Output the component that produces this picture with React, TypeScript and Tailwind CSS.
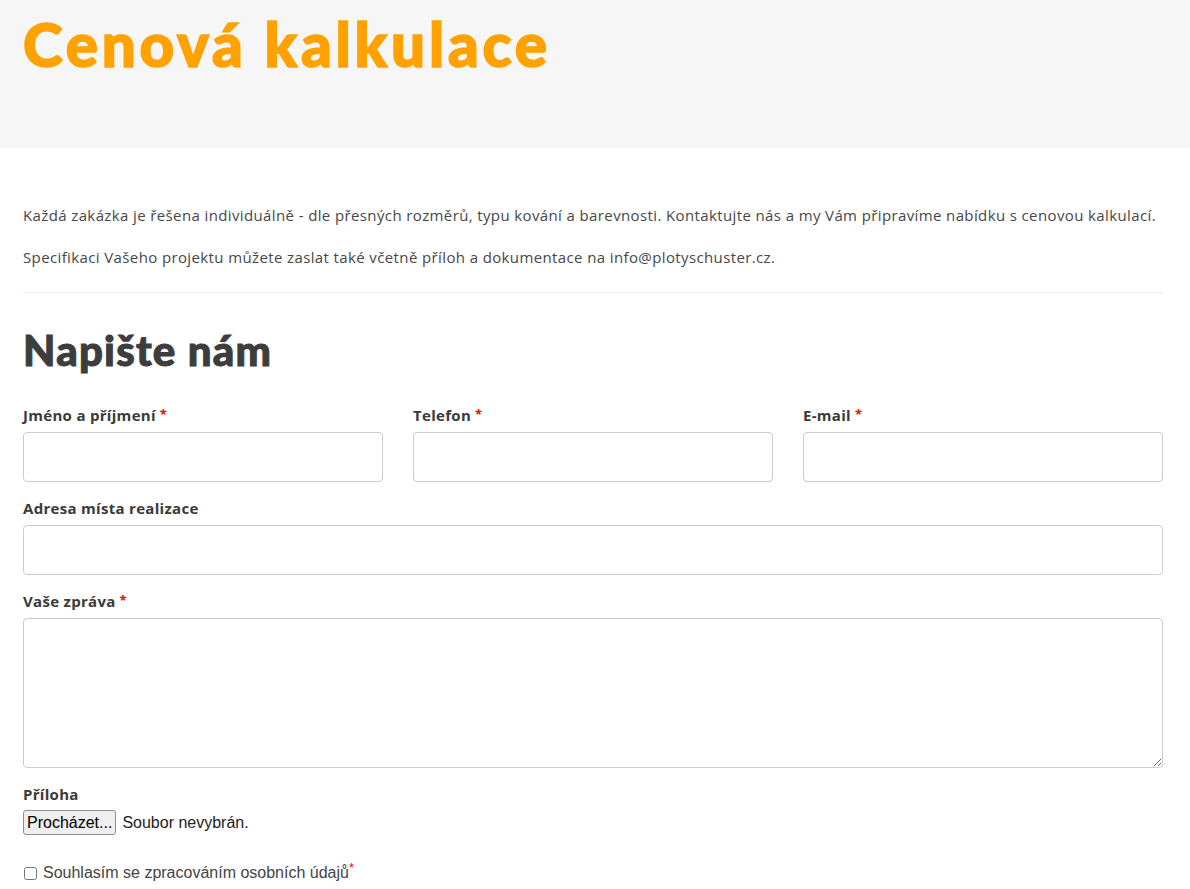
import React from "react";

const font = { fontFamily: "'Open Sans', Lato, sans-serif" };
const sys = { fontFamily: "'Liberation Sans', Arial, sans-serif" };

function Req() {
  return <sup className="ml-[4px] text-[13px] text-[#ff0000] relative top-[-2px]">*</sup>;
}

function Field({ label, required }: { label: string; required?: boolean }) {
  return (
    <div className="flex flex-col">
      <label className="text-[15px] font-bold text-[#3a3a3a] leading-[20px] mb-[7px] tracking-[0.3px]">
        {label}
        {required && <Req />}
      </label>
      <input className="h-[50px] w-full rounded-[4px] border border-[#cccccc] bg-white outline-none" />
    </div>
  );
}

export default function App() {
  return (
    <div className="min-h-screen bg-white text-[#444]" style={font}>
      <header className="h-[148px] bg-[#f6f6f6] pl-[23px] pt-[6px]">
        <h1
          className="text-[60px] font-black leading-[76px] text-[#ffa200] tracking-[3.8px] [-webkit-text-stroke:1.6px_#ffa200]"
          style={{ fontFamily: "Lato, sans-serif" }}
        >
          Cenová kalkulace
        </h1>
      </header>

      <main className="w-[1163px] pl-[23px] pt-[56px]">
        <div className="text-[15px] leading-[22px] text-[#474747] tracking-[0.38px]">
          <p className="mb-[20px]">
            Každá zakázka je řešena individuálně - dle přesných rozměrů, typu kování a barevnosti. Kontaktujte nás a my Vám připravíme nabídku s cenovou kalkulací.
          </p>
          <p>Specifikaci Vašeho projektu můžete zaslat také včetně příloh a dokumentace na info@plotyschuster.cz.</p>
        </div>

        <hr className="mt-[24px] border-0 border-t border-[#ececec]" />

        <h2
          className="mt-[30px] text-[42px] font-black leading-[54px] text-[#3d3d3d] tracking-[1.2px] [-webkit-text-stroke:1px_#3d3d3d]"
          style={{ fontFamily: "Lato, sans-serif" }}
        >
          Napište nám
        </h2>

        <form className="mt-[28px] flex flex-col gap-[16px]">
          <div className="grid grid-cols-3 gap-[30px]">
            <Field label="Jméno a příjmení" required />
            <Field label="Telefon" required />
            <Field label="E-mail" required />
          </div>
          <Field label="Adresa místa realizace" />
          <div className="flex flex-col">
            <label className="text-[15px] font-bold text-[#3a3a3a] leading-[20px] mb-[7px] tracking-[0.3px]">
              Vaše zpráva
              <Req />
            </label>
            <textarea className="h-[150px] w-full rounded-[4px] border border-[#cccccc] bg-white outline-none" />
          </div>
          <div className="flex flex-col">
            <label className="text-[15px] font-bold text-[#3a3a3a] leading-[20px] mb-[6px] tracking-[0.3px]">
              Příloha
            </label>
            <div className="flex items-center gap-[6px]" style={sys}>
              <button
                type="button"
                className="h-[25px] rounded-[3px] border border-[#8f8f8f] bg-[#efefef] px-[3px] text-[16px] leading-[20px] text-black"
              >
                Procházet...
              </button>
              <span className="text-[16px] text-[#222]">Soubor nevybrán.</span>
            </div>
          </div>
          <label className="mt-[10px] flex items-center gap-[6px] text-[16px] text-[#444]" style={sys}>
            <input type="checkbox" className="h-[13px] w-[13px] ml-[1px]" />
            <span>
              Souhlasím se zpracováním osobních údajů
              <sup className="text-[13px] text-[#ff0000]">*</sup>
            </span>
          </label>
        </form>
      </main>
    </div>
  );
}
